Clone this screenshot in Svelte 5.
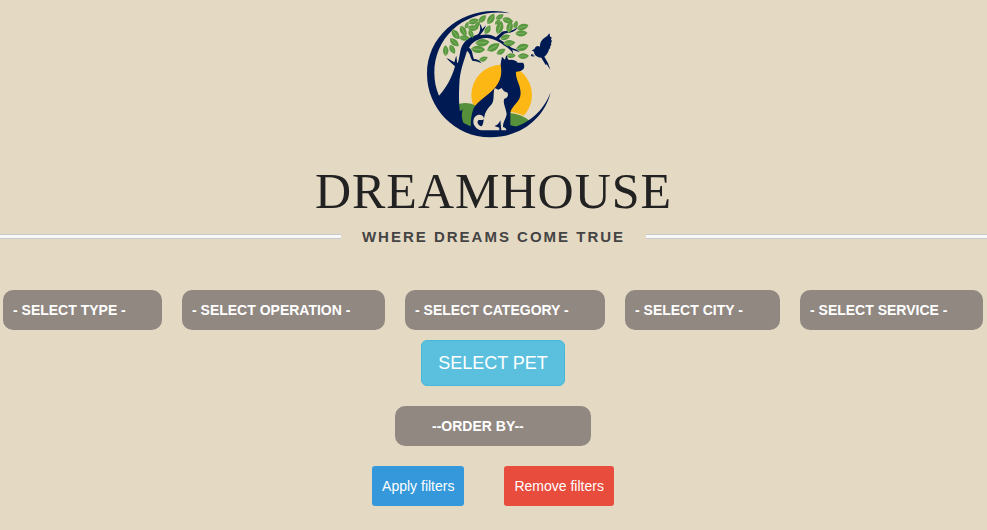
<script>
  const filters = [
    { id: 'type', label: '- SELECT TYPE -', width: 159 },
    { id: 'operation', label: '- SELECT OPERATION -', width: 203 },
    { id: 'category', label: '- SELECT CATEGORY -', width: 200 },
    { id: 'city', label: '- SELECT CITY -', width: 155 },
    { id: 'service', label: '- SELECT SERVICE -', width: 183 }
  ];

  // Leaves of the tree: centre x, centre y, rotation, length scale
  const leaves = [
    [77, 138, -82, 1.05], [97, 134, 72, 1], [103, 113, 52, 1.15], [107, 89, 62, 1.2],
    [130, 79, 72, 1.15], [133, 100, 12, 1.05], [153, 87, 75, 0.9], [140, 62, -60, 0.7],
    [159, 70, 12, 1.1], [160, 50, -8, 1.1], [187, 43, -35, 1], [172, 61, -45, 0.8],
    [213, 43, -48, 1.2], [239, 37, -20, 0.9], [263, 47, 25, 1.1], [203, 75, -50, 1],
    [239, 69, -62, 1.35], [269, 67, -68, 1.2], [233, 52, -30, 0.7], [308, 67, -8, 1.2],
    [304, 86, 8, 1.2], [287, 60, -60, 0.8], [256, 98, -12, 1], [187, 114, 5, 1.4],
    [174, 134, 12, 1.4], [220, 128, -20, 1.4], [268, 115, 5, 1.2], [307, 128, -8, 1.3],
    [243, 141, -20, 1], [273, 153, 10, 0.9], [310, 154, 8, 1.1], [190, 163, -12, 0.95]
  ];
</script>

<main>
  <header>
    <svg class="logo" viewBox="12 1 420 420" role="img" aria-label="Dreamhouse logo">
      <circle cx="245" cy="271" r="91" fill="#fdb714" />
      <path d="M116 298Q146 290 170 304L164 377L120 350Z" fill="#57903a" />
      <path d="M270 325Q305 329 329 348L288 370H266Z" fill="#57903a" />
      <path d="M269 323Q305 326 331 347" fill="none" stroke="#e4d9c3" stroke-width="3" />
      <g fill="#001a54">
        <path d="M276 27C150 -8 21 80 21 207C21 311 105 397 210 398C302 399 374 340 392 263C366 331 307 375 225 377C119 380 43 300 43 205C43 90 145 5 276 27Z" />
        <path d="M57 273C78 251 96 219 105 185C98 178 87 169 79 160C89 164 97 169 103 173C105 165 107 158 109 153C111 165 110 174 113 176C121 156 118 133 131 116C141 101 160 94 174 89C183 78 181 67 179 57C183 61 185 66 187 73L198 62C192 79 185 85 180 92C199 87 216 90 228 98L246 81C260 76 282 81 292 66C291 82 270 83 253 87L237 103C250 111 264 121 276 130Q287 132 300 142Q283 138 277 135L280 148Q269 130 251 122Q231 105 207 101C182 97 157 111 147 129C159 136 156 151 162 163Q176 163 185 176Q171 168 157 168C150 158 151 145 141 139C132 169 119 201 118 238C116 280 117 300 120 320L128 314Q123 333 128 348L137 377C97 365 62 326 54 286Z" />
        <path d="M243 172Q245 160 246 156L255 165Q258 152 261 152Q261 161 266 166Q284 163 293 174L309 174Q316 182 310 194Q302 202 288 201C286 225 301 238 302 265C302 294 273 302 271 326L271 362L290 366L284 379H154C150 356 154 329 160 313C174 286 205 274 226 248C244 226 246 204 242 180Z" />
        <path d="M388 86Q383 94 376 98C364 106 360 114 360 126C352 121 345 126 343 134L335 137L342 141C342 151 352 158 364 159L377 181L380 179L391 195L384 175L373 156C381 150 386 141 387 134L391 130L390 126L394 120L393 116L396 108L393 106L395 98L391 97Z" />
        <path d="M334 148l11 4-8 1 9 5-13-4z" />
      </g>
      <path d="M185 377C169 374 160 362 160 351C160 329 186 324 192 340C192 349 181 345 176 346C169 350 174 363 185 365C190 360 190 349 193 336C198 311 214 305 218 293C223 281 219 263 224 250L235 255L245 250Q251 262 263 264Q267 278 253 282C247 293 259 313 260 329C257 344 249 352 249 367Q259 369 259 377H244L241 347Q236 361 223 364L238 369V377Z" fill="#e4d9c3" />
      {#each leaves as [x, y, angle, scale]}
        <g transform="translate({x} {y}) rotate({angle}) scale({scale})">
          <path d="M-15 2C-8 -10 5 -10 15 -3C7 11 -7 11 -15 2Z" fill="#57983e" />
          <path d="M-14 2L8 -1" fill="none" stroke="#a9c48a" stroke-width="1.2" />
        </g>
      {/each}
    </svg>
    <h1>DREAMHOUSE</h1>
    <p class="tagline"><span>WHERE DREAMS COME TRUE</span></p>
  </header>

  <form onsubmit={(event) => event.preventDefault()}>
    <div class="filters">
      {#each filters as filter}
        <select id={filter.id} aria-label={filter.id} style="width: {filter.width}px">
          <option>{filter.label}</option>
        </select>
      {/each}
    </div>
    <button class="pet" type="button">SELECT PET</button>
    <select class="order" aria-label="Order by">
      <option>--ORDER BY--</option>
    </select>
    <div class="actions">
      <button class="apply" type="submit">Apply filters</button>
      <button class="remove" type="reset">Remove filters</button>
    </div>
  </form>
</main>

<style>
  :global(body) {
    margin: 0;
    background: #e4d9c3;
  }

  main {
    padding: 5px 0 24px;
    font-family: "Liberation Sans", Arial, sans-serif;
  }

  header {
    display: flex;
    flex-direction: column;
    align-items: center;
  }

  .logo {
    width: 140px;
    height: 140px;
  }

  h1 {
    margin: 16px 0 0;
    color: #222;
    font: 400 50px/60px "Liberation Serif", "Times New Roman", serif;
    letter-spacing: 1px;
  }

  .tagline {
    display: flex;
    align-items: center;
    align-self: stretch;
    margin: 5px 0 0;
    color: #444;
    font-size: 15px;
    font-weight: 700;
    line-height: 21px;
    letter-spacing: 2px;
  }

  .tagline span {
    padding: 0 21px;
  }

  .tagline::before,
  .tagline::after {
    content: "";
    flex: 1;
    height: 3px;
    border: solid #c8c8d0;
    border-width: 1px 0;
    background: #f8f8f8;
  }

  form {
    display: flex;
    flex-direction: column;
    align-items: center;
    margin-top: 43px;
    padding-right: 1px;
  }

  .filters {
    display: flex;
    flex-wrap: wrap;
    justify-content: center;
    gap: 10px 20px;
  }

  select {
    appearance: none;
    box-sizing: border-box;
    height: 40px;
    padding: 0 10px;
    border: 0;
    border-radius: 10px;
    background: #918882;
    color: #fff;
    font: 700 14px/20px "Liberation Sans", Arial, sans-serif;
  }

  button {
    font-family: inherit;
    color: #fff;
    cursor: pointer;
  }

  .pet {
    height: 46px;
    margin: 10px 0 20px;
    padding: 0 16px;
    border: 1px solid #46b8da;
    border-radius: 6px;
    background: #5bc0de;
    font-size: 18px;
  }

  .order {
    width: 196px;
    padding: 0 37px;
  }

  .actions {
    display: flex;
    gap: 40px;
    margin-top: 20px;
  }

  .actions button {
    height: 40px;
    padding: 0 10px;
    border: 0;
    border-radius: 3px;
    font-size: 14px;
  }

  .actions .apply {
    background: #3498db;
  }

  .actions .remove {
    background: #e74c3c;
  }
</style>
